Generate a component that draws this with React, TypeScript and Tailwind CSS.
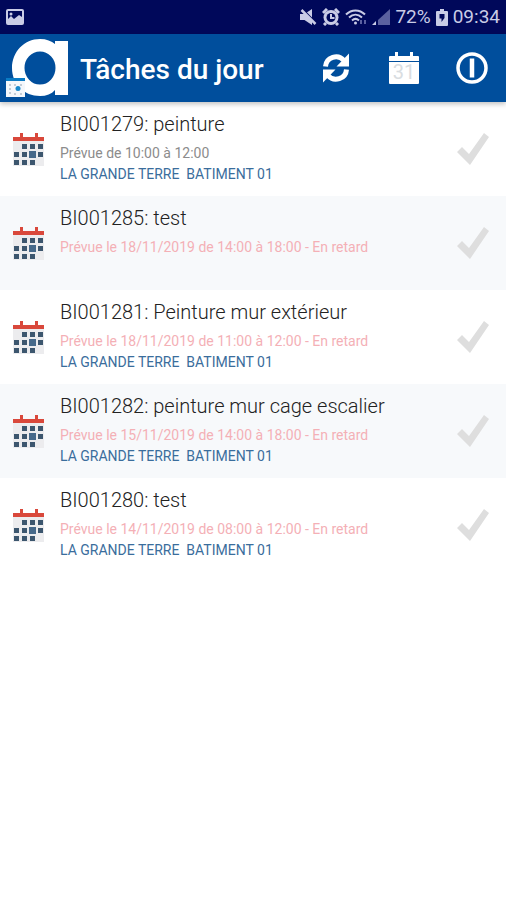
import type { ReactNode } from "react";

interface Task {
    id: string;
    label: string;
    schedule: string;
    late: boolean;
    place?: string;
}

const tasks: Task[] = [
    { id: "BI001279", label: "peinture", schedule: "Prévue de 10:00 à 12:00", late: false, place: "LA GRANDE TERRE  BATIMENT 01" },
    { id: "BI001285", label: "test", schedule: "Prévue le 18/11/2019 de 14:00 à 18:00 - En retard", late: true },
    { id: "BI001281", label: "Peinture mur extérieur", schedule: "Prévue le 18/11/2019 de 11:00 à 12:00 - En retard", late: true, place: "LA GRANDE TERRE  BATIMENT 01" },
    { id: "BI001282", label: "peinture mur cage escalier", schedule: "Prévue le 15/11/2019 de 14:00 à 18:00 - En retard", late: true, place: "LA GRANDE TERRE  BATIMENT 01" },
    { id: "BI001280", label: "test", schedule: "Prévue le 14/11/2019 de 08:00 à 12:00 - En retard", late: true, place: "LA GRANDE TERRE  BATIMENT 01" },
];

function StatusBar() {
    return (
        <div className="flex h-[34px] items-center bg-[#00085a] px-1.5 text-[#c9cce6]">
            <svg viewBox="0 0 18 16" className="h-4 w-[18px]" fill="currentColor">
                <path fillRule="evenodd" d="M2 0h14a2 2 0 0 1 2 2v12a2 2 0 0 1-2 2H2a2 2 0 0 1-2-2V2a2 2 0 0 1 2-2zm0 2v8l3-3 3 3 5-4 3 2V2zm3 1.500a1.500 1.500 0 1 1 0 3 1.500 1.500 0 0 1 0-3z" />
            </svg>
            <div className="ml-auto flex items-center gap-[5px]">
                {/* Son coupé */}
                <svg viewBox="0 0 17 16" className="h-4 w-[17px]" fill="currentColor">
                    <path d="M0 5h4.500L12 0v16l-7.500-5H0z" />
                    <path d="M2.500 0l14 14" stroke="#00085a" strokeWidth="1.500" />
                    <path d="M1.500 1l14 14" stroke="currentColor" strokeWidth="2.500" />
                </svg>
                {/* Alarme */}
                <svg viewBox="0 0 18 18" className="h-[18px] w-[18px]" fill="currentColor">
                    <circle cx="9" cy="9.500" r="7.500" />
                    <path d="M1 5l4-4M17 5l-4-4M4 15l-2 2M14 15l2 2" stroke="currentColor" strokeWidth="3" />
                    <circle cx="9" cy="9.500" r="4.500" fill="#00085a" />
                    <path d="M9 6v4h3.500" stroke="currentColor" strokeWidth="2" fill="none" />
                </svg>
                {/* Wifi */}
                <svg viewBox="0 0 22 18" className="h-[18px] w-[22px]" fill="none" stroke="currentColor" strokeWidth="2">
                    <path d="M1 6.500c5.500-5.500 13.500-5.500 19 0M4 9.500c4-3.800 9-3.800 13 0M7 12.500c2.200-2 4.800-2 7 0" />
                    <circle cx="10.500" cy="15" r="1.500" fill="currentColor" stroke="none" />
                    <path d="M16 12v4M20 12v4" stroke="#5a60a0" strokeWidth="2" />
                </svg>
                {/* Réseau */}
                <svg viewBox="0 0 18 17" className="h-[17px] w-[18px]">
                    <path d="M18 0v16H6v-5z" fill="#5b619f" />
                    <path d="M0 16l4-4v4z" fill="#c9cce6" />
                </svg>
                <span className="text-[19px] leading-6">72%</span>
                {/* Batterie */}
                <svg viewBox="0 0 12 17" className="h-[17px] w-3" fill="currentColor">
                    <path d="M4 0h4v2h3a1 1 0 0 1 1 1v13a1 1 0 0 1-1 1H1a1 1 0 0 1-1-1V3a1 1 0 0 1 1-1h3z" />
                    <path d="M3.500 5h5v4L5.500 13V9.500h-2z" fill="#00085a" />
                </svg>
                <span className="text-[19px] leading-6">09:34</span>
            </div>
        </div>
    );
}

function Logo() {
    return (
        <svg viewBox="0 0 62 60" className="h-[60px] w-[62px]" role="img" aria-label="Logo">
            <path
                fill="#fff"
                fillRule="evenodd"
                d="M34 1c6.500 0 11.500 2 15 5V3h13v54H49v-5c-3.500 4-8.500 6-15 6C18 58 6 46 6 30S18 1 34 1zm0 12.500a15.500 16.500 0 1 0 0 33 15.500 16.500 0 1 0 0-33z"
            />
            <path fill="#f4f7fb" d="M0 41h19v18H0z" />
            <path fill="#0a7bc4" d="M0 40h19v3H0z" />
            <path fill="#c3ccd6" d="M3 46h2v2H3zM8 46h2v2H8zM14 46h2v2h-2zM3 50h2v2H3zM3 54h2v2H3zM8 55h2v2H8zM14 55h2v2h-2z" />
            <circle cx="12" cy="50.500" r="2.500" fill="#1788cc" />
        </svg>
    );
}

function RefreshIcon() {
    return (
        <svg viewBox="0 0 28 30" className="h-[30px] w-7" fill="none" stroke="#fff" strokeWidth="5">
            <path d="M3.500 13.500A10.500 10.500 0 0 1 22 7.500" />
            <path d="M24.500 16.500A10.500 10.500 0 0 1 6 22.500" />
            <path d="M27 0.500v13H14.500z" fill="#fff" stroke="none" />
            <path d="M1 29.500v-13h12.500z" fill="#fff" stroke="none" />
        </svg>
    );
}

function CalendarIcon() {
    return (
        <svg viewBox="0 0 30 32" className="h-8 w-[30px]">
            <path fill="#fff" d="M6 0h3v4h12V0h3v4h5a1 1 0 0 1 1 1v4H0V5a1 1 0 0 1 1-1h5zM0 10h30v21a1 1 0 0 1-1 1H1a1 1 0 0 1-1-1z" />
            <text x="15" y="27" textAnchor="middle" fill="#d9dde1" className="text-xl">31</text>
        </svg>
    );
}

function PowerIcon() {
    return (
        <svg viewBox="0 0 32 32" className="h-8 w-8" fill="none" stroke="#fff">
            <circle cx="16" cy="16" r="14" strokeWidth="3.500" />
            <path d="M16 6.500v19" strokeWidth="4.500" />
        </svg>
    );
}

function TaskIcon() {
    return (
        <svg viewBox="0 0 31 34" className="h-[34px] w-[31px] shrink-0">
            <path fill="#ececee" d="M0 8h31v26H0z" />
            <path fill="#d9483b" d="M0 5h7V1h3v4h12V1h3v4h6v4H0z" />
            <path
                fill="#3c566e"
                d="M9 12h5v5H9zM17 12h5v5h-5zM25 12h5v5h-5zM1 20h5v5H1zM9 20h5v5H9zM25 20h5v5h-5zM1 28h5v5H1zM9 28h5v5H9zM17 28h5v5h-5z"
            />
            <path fill="#46698a" d="M16 19h7v7h-7z" />
        </svg>
    );
}

function IconButton({ label, children }: { label: string; children: ReactNode }) {
    return (
        <button type="button" aria-label={label} className="flex w-[68px] items-center justify-center">
            {children}
        </button>
    );
}

function TaskRow({ task }: { task: Task }) {
    return (
        <li className="flex h-[94px] items-center bg-white pl-[13px] pr-4 even:bg-[#f7f9fb]">
            <TaskIcon />
            <div className="ml-4 min-w-0 flex-1 self-start pt-[9px]">
                <h2 className="mb-1.5 truncate text-xl leading-[26px] font-light text-[#222]">
                    {task.id}: {task.label}
                </h2>
                <p className={task.late ? "text-sm leading-[21px] text-[#f4b0b6]" : "text-sm leading-[21px] text-[#8c8c8c]"}>
                    {task.schedule}
                </p>
                {task.place && (
                    <p className="text-sm leading-[21px] whitespace-pre text-[#3a6d9c]">{task.place}</p>
                )}
            </div>
            <button type="button" aria-label={`Terminer ${task.id}`} className="shrink-0">
                <svg viewBox="0 0 34 34" className="h-[34px] w-[34px]">
                    <path fill="#dedede" d="M28 1l5 4-19 28L1 20l5-5 7 7z" />
                </svg>
            </button>
        </li>
    );
}

export default function App() {
    return (
        <div className="min-h-screen bg-white font-[Roboto,sans-serif]">
            <StatusBar />
            <header className="relative flex h-[68px] items-center bg-[#004e9c] pl-1.5 shadow-[0_2px_5px_rgba(0,0,0,0.25)]">
                <Logo />
                <h1 className="ml-3 flex-1 pt-1 text-[28px] leading-9 font-medium text-white">Tâches du jour</h1>
                <IconButton label="Actualiser">
                    <RefreshIcon />
                </IconButton>
                <IconButton label="Calendrier">
                    <CalendarIcon />
                </IconButton>
                <IconButton label="Déconnexion">
                    <PowerIcon />
                </IconButton>
            </header>
            <ul>
                {tasks.map((task) => (
                    <TaskRow key={task.id} task={task} />
                ))}
            </ul>
        </div>
    );
}
